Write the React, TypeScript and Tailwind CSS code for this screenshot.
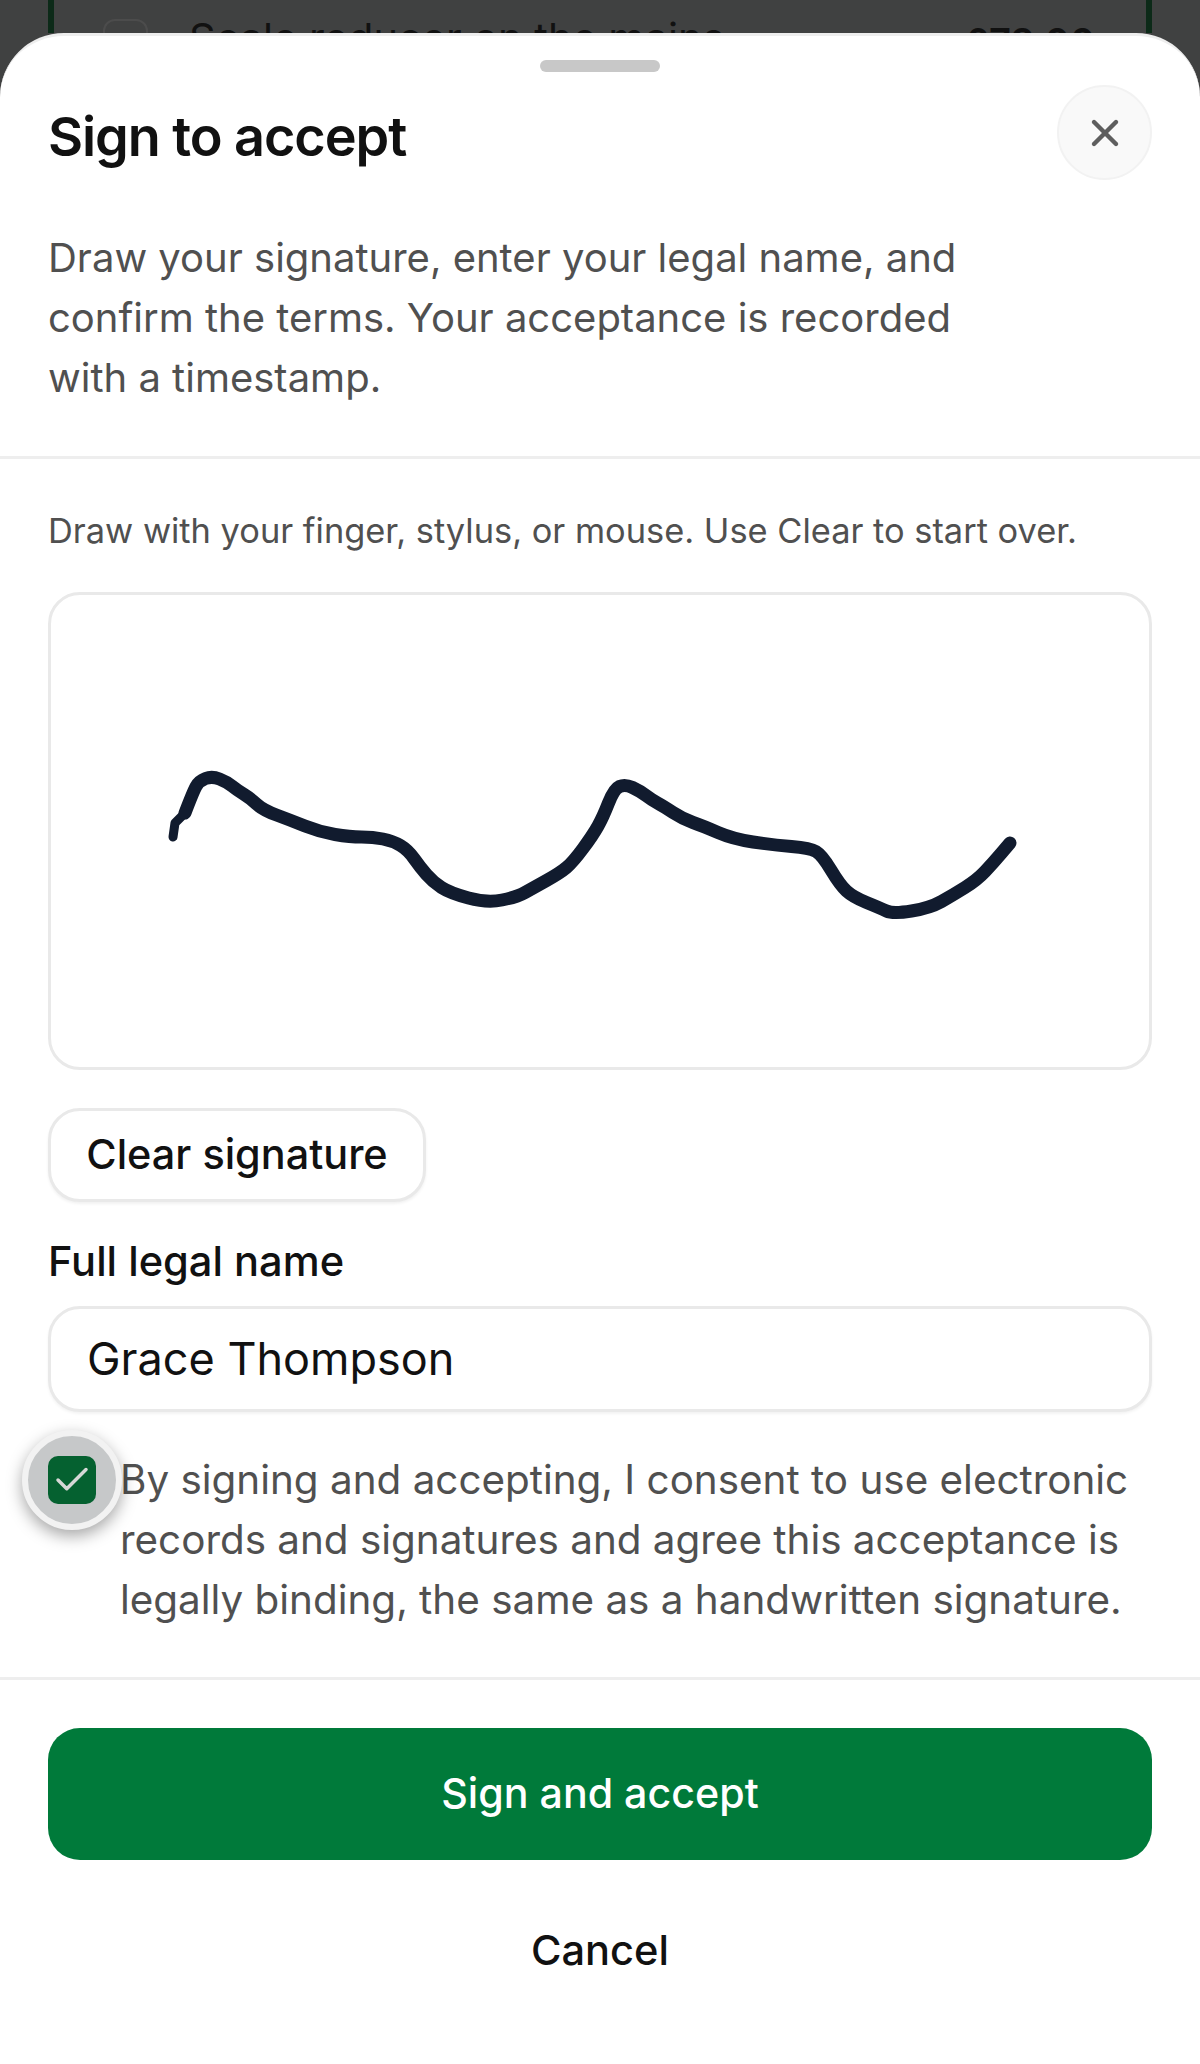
import React from "react";
import { X, Check } from "lucide-react";

const font = { fontFamily: "Inter, 'Liberation Sans', sans-serif" };

const pts: [number, number][] = [
  [185, 813], [193, 792], [199, 781], [212, 776], [227, 782], [237, 790], [250, 798], [263, 810], [290, 820],
  [320, 832], [350, 837], [373, 837], [393, 841], [408, 850], [420, 867], [433, 882], [450, 893], [487, 903],
  [517, 897], [533, 888], [560, 873], [573, 862], [593, 835], [603, 817], [614, 789], [625, 784], [640, 791],
  [652, 800], [663, 806], [683, 819], [703, 826], [733, 839], [773, 845], [810, 848], [822, 855], [840, 885],
  [853, 897], [880, 908], [893, 914], [930, 908], [953, 895], [977, 880], [993, 863], [1010, 843],
];

function smooth(p: [number, number][]) {
  let d = `M${p[0][0]} ${p[0][1]}`;
  for (let i = 1; i < p.length - 1; i++) {
    const mx = (p[i][0] + p[i + 1][0]) / 2;
    const my = (p[i][1] + p[i + 1][1]) / 2;
    d += ` Q${p[i][0]} ${p[i][1]} ${mx} ${my}`;
  }
  const last = p[p.length - 1];
  return d + ` L${last[0]} ${last[1]}`;
}

export default function App() {
  return (
    <div style={font} className="relative w-[1200px] h-[2064px] overflow-hidden bg-[#404141]">
      <div className="mx-[48px] h-[33px] overflow-hidden border-x-[6px] border-[#0c2a18] flex items-start pl-[49px] pr-[51px]">
        <div className="mt-[19px] w-[45px] h-[45px] rounded-[12px] border-2 border-[#4c4c4c] shrink-0" />
        <div className="ml-[41px] mt-[10px] flex-1 text-[41.5px] leading-[56px] text-[#111111] whitespace-nowrap">Scale reducer on the mains</div>
        <div className="mt-[14px] text-[38px] leading-[56px] font-semibold text-[#111111]">£78.00</div>
      </div>
      <div className="h-[2031px] bg-white rounded-t-[64px] border-t-[3px] border-[#eeeeee] flex flex-col">
        <div className="h-[24px] pt-[24px] flex justify-center">
          <div className="w-[120px] h-[12px] rounded-full bg-[#c8c8c8] shrink-0" />
        </div>
        <div className="flex items-start justify-between px-[48px] pt-[25px]">
          <h2 className="text-[54px] leading-[64px] font-semibold text-[#111111] tracking-[-1.08px] mt-[20px]">Sign to accept</h2>
          <button className="w-[95px] h-[95px] rounded-full bg-[#f9f9f9] border-2 border-[#f2f2f2] flex items-center justify-center text-[#5e5e5e]">
            <X size={44} strokeWidth={2.4} />
          </button>
        </div>
        <p className="px-[48px] mt-[48px] text-[40px] leading-[60px] text-[#505050] w-[1040px]">
          Draw your signature, enter your legal name, and confirm the terms. Your acceptance is recorded with a timestamp.
        </p>
        <div className="mt-[48px] h-[3px] bg-[#eeeeee]" />
        <div className="px-[48px] flex-1 flex flex-col">
          <p className="mt-[49px] text-[34.4px] leading-[46px] text-[#505050]">Draw with your finger, stylus, or mouse. Use Clear to start over.</p>
          <div className="mt-[38px] h-[478px] rounded-[32px] border-[3px] border-[#e9e9e9] bg-white relative">
            <svg className="absolute inset-0 w-full h-full" viewBox="51 595 1098 472" fill="none">
              <path d="M173 837 L175 823 L185 813" stroke="#111b2e" strokeWidth="9" strokeLinecap="round" strokeLinejoin="round" />
              <path d={smooth(pts)} stroke="#111b2e" strokeWidth="13" strokeLinecap="round" strokeLinejoin="round" />
            </svg>
          </div>
          <button className="mt-[38px] self-start h-[94px] w-[378px] rounded-[32px] border-[3px] border-[#e9e9e9] bg-white text-[41.4px] leading-none font-medium text-[#111111] shadow-[0_2px_3px_rgba(0,0,0,0.06)]">Clear signature</button>
          <label className="mt-[32px] text-[41.6px] leading-[54px] font-medium text-[#111111]">Full legal name</label>
          <div className="mt-[18px] h-[106px] rounded-[32px] border-[3px] border-[#e9e9e9] bg-white flex items-center px-[36px] text-[45px] text-[#111111] shadow-[0_2px_3px_rgba(0,0,0,0.05)]">Grace Thompson</div>
          <div className="relative mt-[38px] pl-[72px] text-[40.4px] leading-[60px] text-[#505050]">
            <div className="absolute left-[-26px] top-[-20px] w-[100px] h-[100px] rounded-full bg-[#c6c8c9] border-[6px] border-[#f2f2f2] shadow-[0_6px_16px_rgba(0,0,0,0.35)] flex items-center justify-center">
              <div className="w-[48px] h-[48px] rounded-[10px] bg-[#056130] flex items-center justify-center text-[#d6d8d6]">
                <Check size={42} strokeWidth={2} />
              </div>
            </div>
            By signing and accepting, I consent to use electronic records and signatures and agree this acceptance is legally binding, the same as a handwritten signature.
          </div>
        </div>
        <div className="h-[3px] bg-[#eeeeee]" />
        <div className="px-[48px] pt-[48px] pb-[64px] flex flex-col items-stretch">
          <button className="h-[132px] rounded-[32px] bg-[#007a3a] text-white text-[41.2px] font-medium">Sign and accept</button>
          <button className="mt-[40px] h-[100px] text-[41.6px] font-medium text-[#111111]">Cancel</button>
        </div>
      </div>
    </div>
  );
}
